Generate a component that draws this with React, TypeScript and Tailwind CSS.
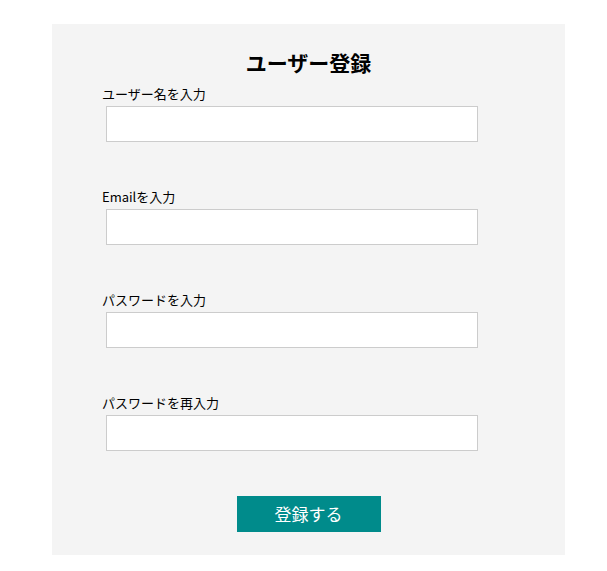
const fields = [
  { id: "username", label: "ユーザー名を入力", type: "text" },
  { id: "email", label: "Emailを入力", type: "email" },
  { id: "password", label: "パスワードを入力", type: "password" },
  { id: "password2", label: "パスワードを再入力", type: "password" },
];

export default function App() {
  return (
    <div className="min-h-[571px] bg-white pt-[24px] font-['Noto_Sans_CJK_JP','Noto_Sans',sans-serif] text-black">
      <div className="ml-[52px] flex w-[513px] flex-col bg-[#f4f4f4] pt-[24px] pb-[23px]">
        <h1 className="text-center text-[21px] font-bold leading-[28px]">ユーザー登録</h1>
        <form className="mt-[10px] flex flex-col gap-[47px] pl-[50px]">
          {fields.map((f) => (
            <div key={f.id} className="flex flex-col">
              <label htmlFor={f.id} className="block text-[13px] leading-[16px]">
                {f.label}
              </label>
              <input
                id={f.id}
                type={f.type}
                className="mt-[4px] ml-[4px] h-[36px] w-[372px] border border-[#cccccc] bg-white px-2 outline-none"
              />
            </div>
          ))}
        </form>
        <button
          type="button"
          className="mx-auto mt-[45px] h-[36px] w-[144px] bg-[#008b8b] text-[17px] leading-[36px] text-white"
        >
          登録する
        </button>
      </div>
    </div>
  );
}
